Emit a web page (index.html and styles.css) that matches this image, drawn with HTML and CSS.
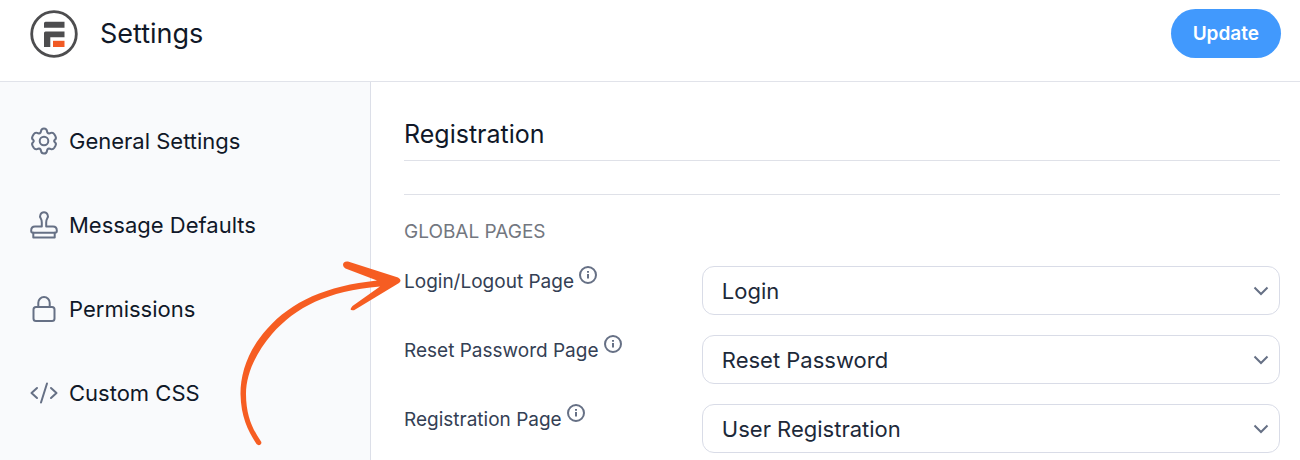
FILE: index.html
```html
<!DOCTYPE html>
<html lang="en">
<head>
    <meta charset="UTF-8">
    <meta name="viewport" content="width=device-width, initial-scale=1.0">
    <title>Settings</title>
    <link rel="stylesheet" href="styles.css">
</head>
<body>

<!-- Shared symbols -->
<svg class="symbols" aria-hidden="true">
    <symbol id="info" viewBox="0 0 18 18">
        <circle cx="9" cy="9" r="8"/>
        <path d="M9 8v4.500M9 5v1.700"/>
    </symbol>
    <symbol id="chevron" viewBox="0 0 16 10">
        <path d="M1.500 1.500L8 8l6.500-6.500"/>
    </symbol>
</svg>

<header class="header">
    <svg class="logo" viewBox="0 0 48 48" aria-hidden="true">
        <circle cx="24" cy="24" r="22.300" fill="#fff" stroke="#4d4d4f" stroke-width="2.800"/>
        <path fill="#4d4d4f" d="M15.500 11.800H34.500V17.800H14V13.300a1.500 1.500 0 0 1 1.500-1.500zM15.500 21.500H34.500V27.300H20.300V37H14V23a1.500 1.500 0 0 1 1.500-1.500z"/>
        <path fill="#f15a24" d="M23 30.800h11.500V37H23z"/>
    </svg>
    <h1>Settings</h1>
    <button type="button" class="update">Update</button>
</header>

<div class="layout">
    <nav class="sidebar">
        <a href="#general">
            <svg viewBox="0 0 28 28" aria-hidden="true">
                <path d="M11 4.200Q11.300 1.500 14 1.500T17 4.200Q17.200 6.300 19 6.500Q20 6.300 20.900 5.900Q23 5.200 24.300 7.300L25.600 9.600Q26.600 11.700 24.700 12.900Q23.600 14 24.700 15.100Q26.600 16.300 25.600 18.400L24.300 20.700Q23 22.800 20.900 22.100Q20 21.700 19 21.500Q17.200 21.700 17 23.800Q16.700 26.500 14 26.500T11 23.800Q10.800 21.700 9 21.500Q8 21.700 7.100 22.100Q5 22.800 3.700 20.700L2.400 18.400Q1.400 16.300 3.300 15.100Q4.400 14 3.300 12.900Q1.400 11.700 2.400 9.600L3.700 7.300Q5 5.200 7.100 5.900Q8 6.300 9 6.500Q10.800 6.300 11 4.200z"/>
                <circle cx="14" cy="14" r="4.300"/>
            </svg>
            General Settings
        </a>
        <a href="#messages">
            <svg viewBox="0 0 28 28" aria-hidden="true">
                <path d="M11.800 15.500V11.500Q11.800 9 10.800 7.500Q9.500 5.500 10.400 3.700Q11.400 1.300 14 1.300T17.600 3.700Q18.500 5.500 17.200 7.500Q16.200 9 16.200 11.500V15.500H23Q26.800 15.500 26.800 19.500V20Q26.800 21.800 25 21.800H3Q1.200 21.800 1.200 20V19.500Q1.200 15.500 5 15.500z"/>
                <path d="M3.300 21.800V26.600H24.700V21.800"/>
            </svg>
            Message Defaults
        </a>
        <a href="#permissions">
            <svg viewBox="0 0 28 28" aria-hidden="true">
                <rect x="3.500" y="12" width="21" height="14" rx="2.500"/>
                <path d="M8.300 12V7.800a5.700 5.700 0 0 1 11.400 0V12"/>
            </svg>
            Permissions
        </a>
        <a href="#css">
            <svg viewBox="0 0 28 28" aria-hidden="true">
                <path d="M7 9L1.500 14l5.500 5M21 9l5.500 5-5.500 5M17 4.500l-6 19"/>
            </svg>
            Custom CSS
        </a>
    </nav>

    <main class="content">
        <h2>Registration</h2>
        <h3>Global Pages</h3>

        <div class="field">
            <label for="loginPage">Login/Logout Page <svg class="info"><use href="#info"/></svg></label>
            <div class="select">
                <select id="loginPage">
                    <option>Login</option>
                </select>
                <svg class="chevron"><use href="#chevron"/></svg>
            </div>
            <svg class="arrow" viewBox="0 0 170 195" aria-hidden="true">
                <path d="M27 186.500C19 175 12 161 12 139C12 120 21 99 38 79C62 52 93 36 146 31.500L118.500 51Q114 56 120 55.200L165 28Q168.500 25 164 22.500L114 6.500Q109 6 109 10Q109.300 12.500 111.500 13.400L143 25.500C92 31 58 46 33 74C14 95 6.500 118 6.500 139C7 162 14 176 22.500 189Q24.500 191 26.500 189.500Q28 188 27 186.500z"/>
            </svg>
        </div>

        <div class="field">
            <label for="resetPage">Reset Password Page <svg class="info"><use href="#info"/></svg></label>
            <div class="select">
                <select id="resetPage">
                    <option>Reset Password</option>
                </select>
                <svg class="chevron"><use href="#chevron"/></svg>
            </div>
        </div>

        <div class="field">
            <label for="registrationPage">Registration Page <svg class="info"><use href="#info"/></svg></label>
            <div class="select">
                <select id="registrationPage">
                    <option>User Registration</option>
                </select>
                <svg class="chevron"><use href="#chevron"/></svg>
            </div>
        </div>
    </main>
</div>

</body>
</html>
```

FILE: styles.css
```css
* {
    box-sizing: border-box;
}
body {
    display: flex;
    flex-direction: column;
    min-height: 100vh;
    margin: 0;
    font-family: Inter, sans-serif;
    font-size: 22px;
    color: #101828;
    background: #fff;
}
h1, h2, h3 {
    margin: 0;
    font-weight: 400;
}
.symbols {
    position: absolute;
    width: 0;
    height: 0;
}

/* Header */
.header {
    display: flex;
    align-items: center;
    gap: 22px;
    padding: 9px 19px 23px 30px;
    border-bottom: 1px solid #e1e3ea;
}
.logo {
    width: 48px;
    height: 48px;
}
h1 {
    font-size: 27px;
    line-height: 32px;
}
.update {
    height: 49px;
    margin-left: auto;
    padding: 0 22px;
    border: none;
    border-radius: 25px;
    font-family: inherit;
    font-size: 19px;
    font-weight: 600;
    color: #fff;
    background: #4199fd;
    cursor: pointer;
}

.layout {
    display: flex;
    flex: 1;
}

/* Sidebar */
.sidebar {
    flex: 0 0 371px;
    padding-top: 17px;
    border-right: 1px solid #dcdfe8;
    background: #f9fafc;
}
.sidebar a {
    display: flex;
    align-items: center;
    gap: 11px;
    height: 84px;
    padding-left: 30px;
    color: inherit;
    text-decoration: none;
}
.sidebar svg {
    width: 28px;
    height: 28px;
    fill: none;
    stroke: #667085;
    stroke-width: 2;
    stroke-linecap: round;
    stroke-linejoin: round;
}

/* Content */
.content {
    flex: 1;
    min-width: 0;
    padding: 36px 20px 0 33px;
}
h2 {
    padding-bottom: 10px;
    border-bottom: 1px solid #dfe1e8;
    font-size: 25px;
    line-height: 32px;
}
h3 {
    margin: 33px 0 22px;
    padding-top: 24px;
    border-top: 1px solid #dfe1e8;
    font-size: 19px;
    line-height: 25px;
    text-transform: uppercase;
    color: #73777f;
}
.field {
    position: relative;
    display: grid;
    grid-template-columns: 34% 66%;
    margin-bottom: 20px;
}
.field:last-child {
    margin-bottom: 0;
}
.field label {
    font-size: 19px;
    line-height: 25px;
    color: #344054;
}
.info {
    width: 18px;
    height: 18px;
    vertical-align: 4px;
    fill: none;
    stroke: #667085;
    stroke-width: 2;
}
.select {
    position: relative;
}
select {
    display: block;
    width: 100%;
    height: 49px;
    padding: 0 48px 0 19px;
    border: 1px solid #d9dce7;
    border-radius: 12px;
    appearance: none;
    font-family: inherit;
    font-size: 22px;
    color: #1d2939;
    background: #fff;
}
.chevron {
    position: absolute;
    top: 20px;
    right: 11px;
    width: 16px;
    height: 10px;
    fill: none;
    stroke: #667085;
    stroke-width: 2;
    pointer-events: none;
}

/* Arrow pointing at the login page setting */
.arrow {
    position: absolute;
    top: -11px;
    left: -170px;
    width: 170px;
    height: 195px;
    fill: #f65d22;
    pointer-events: none;
}
```
